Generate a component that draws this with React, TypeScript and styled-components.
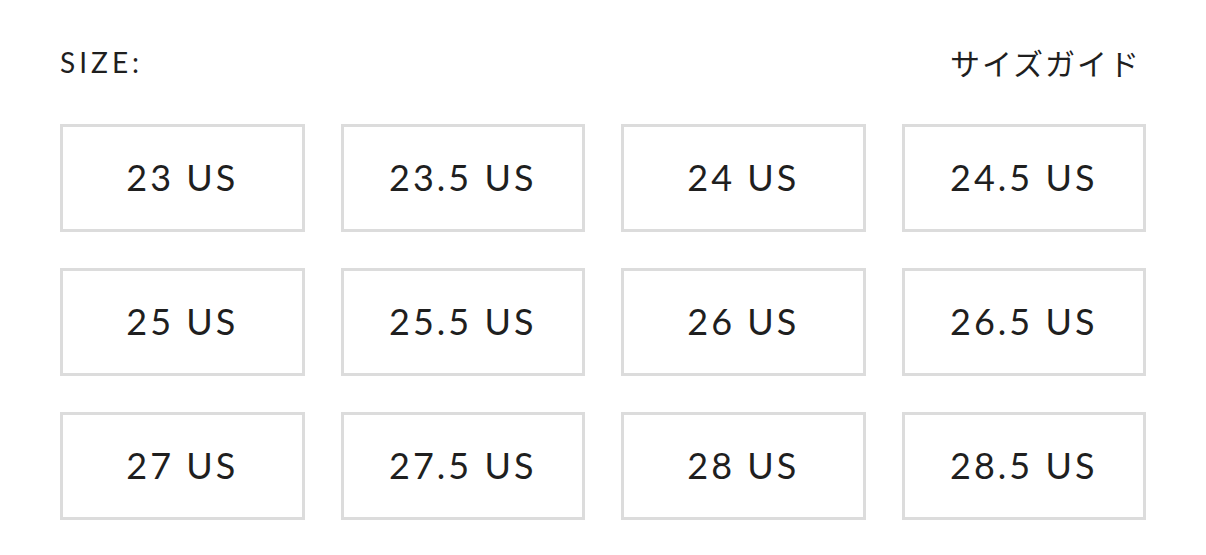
import React from "react";
import styled, { createGlobalStyle } from "styled-components";

const GlobalStyle = createGlobalStyle`
  html, body {
    margin: 0;
    padding: 0;
    background: #ffffff;
  }
  body {
    font-family: Lato, "Noto Sans CJK JP", sans-serif;
    color: #1f1f1f;
  }
`;

const Page = styled.div`
  padding: 42px 60px 0 60px;
`;

const Header = styled.div`
  display: flex;
  justify-content: space-between;
  align-items: center;
  height: 40px;
`;

const Label = styled.span`
  font-family: Lato, sans-serif;
  font-size: 28px;
  letter-spacing: 4px;
  color: #1f1f1f;
`;

const GuideLink = styled.a`
  font-family: "Noto Sans CJK JP", sans-serif;
  font-size: 30px;
  letter-spacing: 2px;
  margin-right: 5px;
  color: #1f1f1f;
  text-decoration: none;
  cursor: pointer;
`;

const Grid = styled.div`
  margin-top: 42px;
  display: grid;
  grid-template-columns: repeat(4, 1fr);
  grid-auto-rows: 108px;
  gap: 36px;
`;

const SizeButton = styled.button<{ $selected?: boolean }>`
  box-sizing: border-box;
  border: 3px solid ${(p) => (p.$selected ? "#1f1f1f" : "#dcdcdc")};
  background: #ffffff;
  display: flex;
  align-items: center;
  justify-content: center;
  font-family: Lato, sans-serif;
  font-size: 36px;
  letter-spacing: 3px;
  color: #1f1f1f;
  padding: 0 0 3px 0;
  cursor: pointer;
`;

const sizes = ["23", "23.5", "24", "24.5", "25", "25.5", "26", "26.5", "27", "27.5", "28", "28.5"];

export default function App() {
  return (
    <>
      <GlobalStyle />
      <Page>
        <Header>
          <Label>SIZE:</Label>
          <GuideLink>サイズガイド</GuideLink>
        </Header>
        <Grid>
          {sizes.map((s) => (
            <SizeButton key={s}>{s} US</SizeButton>
          ))}
        </Grid>
      </Page>
    </>
  );
}
